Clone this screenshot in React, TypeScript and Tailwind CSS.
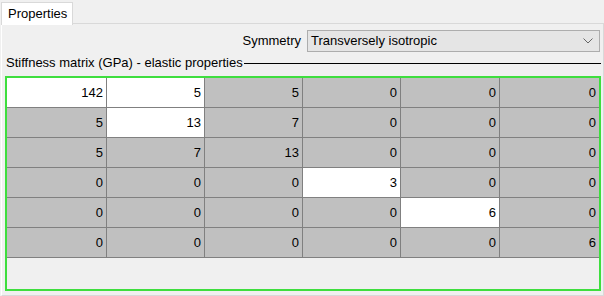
import React from "react";

const matrix = [
  [142, 5, 5, 0, 0, 0],
  [5, 13, 7, 0, 0, 0],
  [5, 7, 13, 0, 0, 0],
  [0, 0, 0, 3, 0, 0],
  [0, 0, 0, 0, 6, 0],
  [0, 0, 0, 0, 0, 6],
];

// white cells are the editable ones
const editable = (r: number, c: number) => (r === 0 && c < 2) || (r === c && r !== 2 && r !== 5);

const App = () => {
  return (
    <div
      className="w-[604px] h-[296px] bg-[#f0f0f0] overflow-hidden text-[13px] text-black"
      style={{ fontFamily: '"Liberation Sans", Arial, sans-serif' }}
    >
      {/* Tab header */}
      <div className="h-[24px] pt-[2px] pl-[1px] flex">
        <div className="relative z-10 w-[72px] h-[23px] bg-white border border-b-0 border-[#d9d9d9] pl-[6px] pt-[3px] leading-[16px]">
          Properties
        </div>
      </div>

      {/* Tab panel */}
      <div className="ml-[1px] h-[273px] border border-[#d9d9d9] border-l-white bg-[#f0f0f0] -mt-px">
        {/* Symmetry row */}
        <div className="flex justify-end items-center gap-[6px] pt-[6px] pr-[3px]">
          <span className="leading-[22px]">Symmetry</span>
          <div className="w-[293px] h-[22px] bg-[#e5e5e5] border border-[#adadad] flex items-center justify-between pl-[3px] pr-[6px]">
            <span className="leading-[20px]">Transversely isotropic</span>
            <svg width="10" height="6" viewBox="0 0 10 6" fill="none">
              <path d="M0.5 0.5 L5 5 L9.5 0.5" stroke="#666" strokeWidth="1" />
            </svg>
          </div>
        </div>

        {/* Group heading */}
        <div className="flex items-center gap-[1px] pl-[4px] pr-[2px] mt-[4px] h-[14px]">
          <span className="leading-[14px] whitespace-nowrap">Stiffness matrix (GPa) - elastic properties</span>
          <div className="flex-1 h-px bg-black mt-[1px]" />
        </div>

        {/* Matrix table */}
        <div className="ml-[3px] mr-[2px] mt-[6px] h-[215px] border-2 border-[#3ede3e] bg-[#f0f0f0]">
          <div className="grid grid-cols-[100px_98px_98px_98px_99px_1fr]">
            {matrix.map((row, r) =>
              row.map((v, c) => (
                <div
                  key={`${r}-${c}`}
                  className={`h-[30px] border-b border-[#808080] ${c < 5 ? "border-r" : ""} ${
                    editable(r, c) ? "bg-white" : "bg-[#c0c0c0]"
                  } flex items-center justify-end pr-[3px]`}
                >
                  <span className="leading-[14px]">{v}</span>
                </div>
              ))
            )}
          </div>
        </div>
      </div>
    </div>
  );
};

export default App;
